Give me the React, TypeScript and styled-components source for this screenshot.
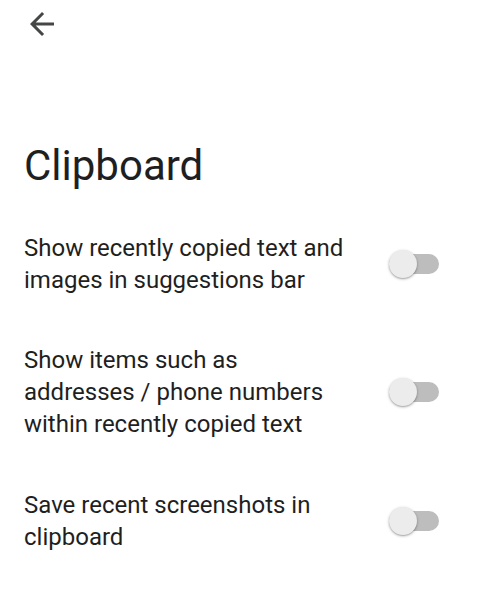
import React, { useState } from "react";
import styled, { createGlobalStyle } from "styled-components";

const GlobalStyle = createGlobalStyle`
  html, body {
    margin: 0;
    padding: 0;
    background: #ffffff;
  }
  body {
    font-family: Roboto, "Noto Sans", Arial, sans-serif;
    -webkit-font-smoothing: antialiased;
  }
`;

const Page = styled.div`
  width: 480px;
  min-height: 594px;
  background: #ffffff;
  display: flex;
  flex-direction: column;
`;

const TopBar = styled.div`
  height: 50px;
  display: flex;
  align-items: flex-start;
  padding: 6px 0 0 24px;
  box-sizing: border-box;
`;

const BackButton = styled.button`
  width: 36px;
  height: 36px;
  padding: 0;
  border: none;
  background: transparent;
  color: #444746;
  display: flex;
  align-items: center;
  justify-content: center;
  cursor: pointer;
`;

const Title = styled.h1`
  margin: 92px 0 18px 24px;
  font-family: Roboto, sans-serif;
  font-weight: 400;
  font-size: 42px;
  line-height: 48px;
  color: #1f1f1f;
`;

const List = styled.div`
  display: flex;
  flex-direction: column;
`;

const Row = styled.div<{ $padTop?: number }>`
  display: flex;
  align-items: center;
  gap: 40px;
  padding: ${(p) => p.$padTop ?? 24}px 41px 24px 24px;
`;

const Label = styled.div`
  flex: 1;
  font-family: Roboto, sans-serif;
  font-size: 24px;
  line-height: 32px;
  color: #1f1f1f;
`;

const SwitchTrack = styled.button<{ $on: boolean }>`
  position: relative;
  width: 50px;
  height: 20px;
  border-radius: 10px;
  border: none;
  padding: 0;
  background: ${(p) => (p.$on ? "#a8c7fa" : "#bdbdbd")};
  cursor: pointer;
  flex-shrink: 0;
`;

const SwitchThumb = styled.span<{ $on: boolean }>`
  position: absolute;
  top: -4px;
  left: ${(p) => (p.$on ? "22px" : "0px")};
  width: 28px;
  height: 28px;
  border-radius: 50%;
  background: ${(p) => (p.$on ? "#0b57d0" : "#ececec")};
  box-shadow: 0 1px 3px rgba(0, 0, 0, 0.3), 0 1px 1px rgba(0, 0, 0, 0.12);
`;

const Toggle: React.FC<{ initial?: boolean }> = ({ initial = false }) => {
  const [on, setOn] = useState(initial);
  return (
    <SwitchTrack $on={on} onClick={() => setOn(!on)} aria-pressed={on}>
      <SwitchThumb $on={on} />
    </SwitchTrack>
  );
};

const items = [
  { text: "Show recently copied text and images in suggestions bar", pad: 24 },
  { text: "Show items such as addresses / phone numbers within recently copied text", pad: 24 },
  { text: "Save recent screenshots in clipboard", pad: 25 },
];

export default function App() {
  return (
    <>
      <GlobalStyle />
      <Page>
        <TopBar>
          <BackButton aria-label="Back">
            <svg width="36" height="36" viewBox="0 0 24 24" fill="currentColor">
              <path d="M20 11H7.83l5.59-5.59L12 4l-8 8 8 8 1.41-1.41L7.83 13H20v-2z" />
            </svg>
          </BackButton>
        </TopBar>
        <Title>Clipboard</Title>
        <List>
          {items.map((it) => (
            <Row key={it.text} $padTop={it.pad}>
              <Label>{it.text}</Label>
              <Toggle />
            </Row>
          ))}
        </List>
      </Page>
    </>
  );
}
